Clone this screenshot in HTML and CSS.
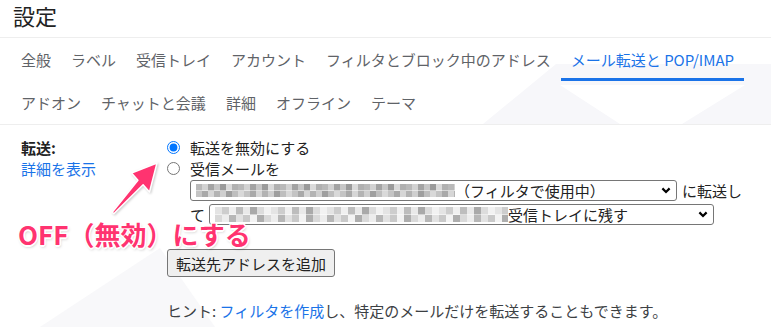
FILE: index.html
```html
<!DOCTYPE html>
<html lang="ja">
  <head>
    <meta charset="UTF-8" />
    <meta name="viewport" content="width=device-width, initial-scale=1.0" />
    <title>設定 - メール転送と POP/IMAP</title>
    <link rel="stylesheet" href="styles.css">
  </head>
  <body>
    <!-- faint background shapes -->
    <svg class="backdrop" width="771" height="327" viewBox="0 0 771 327">
      <path fill="#f7f7fa" fill-rule="evenodd"
        d="M483 124 L556 64 L771 64 L771 124 Z M560 85 L745 85 L682 124 L620 124 Z" />
      <path fill="#f8f8fa" d="M40 327 L160 248 L215 327 Z" />
    </svg>

    <h1 class="page-title">設定</h1>

    <nav class="tabs">
      <div class="tab-row">
        <a class="tab">全般</a>
        <a class="tab">ラベル</a>
        <a class="tab">受信トレイ</a>
        <a class="tab">アカウント</a>
        <a class="tab">フィルタとブロック中のアドレス</a>
        <a class="tab active">メール転送と POP/IMAP</a>
      </div>
      <div class="tab-row">
        <a class="tab">アドオン</a>
        <a class="tab">チャットと会議</a>
        <a class="tab">詳細</a>
        <a class="tab">オフライン</a>
        <a class="tab">テーマ</a>
      </div>
    </nav>

    <section class="forwarding">
      <div class="label-col">
        <div class="setting-name">転送:</div>
        <a class="more-link">詳細を表示</a>
      </div>

      <div class="options">
        <label class="radio-row">
          <input type="radio" name="fwd" checked />
          <span>転送を無効にする</span>
        </label>
        <label class="radio-row">
          <input type="radio" name="fwd" />
          <span>受信メールを</span>
        </label>

        <div class="fwd-line">
          <div class="fake-select addr">
            <span class="blur"></span>
            <span class="sel-text">（フィルタで使用中）</span>
            <svg class="chevron" width="10" height="7" viewBox="0 0 10 7">
              <path d="M1.4 1.4 L5 5 L8.6 1.4" fill="none" stroke="#000" stroke-width="2.2" />
            </svg>
          </div>
          <span class="after">に転送し</span>
        </div>
        <div class="fwd-line second">
          <span class="after">て</span>
          <div class="fake-select action">
            <span class="blur"></span>
            <span class="sel-text">受信トレイに残す</span>
            <svg class="chevron" width="10" height="7" viewBox="0 0 10 7">
              <path d="M1.4 1.4 L5 5 L8.6 1.4" fill="none" stroke="#000" stroke-width="2.2" />
            </svg>
          </div>
        </div>

        <button class="add-button">転送先アドレスを追加</button>

        <p class="hint">
          ヒント: <a class="hint-link">フィルタを作成</a>し、特定のメールだけを転送することもできます。
        </p>
      </div>
    </section>

    <!-- annotation -->
    <div class="callout">OFF（無効）にする</div>
    <svg class="arrow" width="771" height="327" viewBox="0 0 771 327">
      <polygon
        points="112.2,212.3 137.9,180.2 131.5,173 157,163 149.5,192 143.1,184.8 113.8,213.7"
        fill="#ff3370" stroke="#fff" stroke-width="1.5" stroke-linejoin="round" />
    </svg>
  </body>
</html>
```

FILE: styles.css
```css
html {
  background: #fff;
}

body {
  margin: 0;
  position: relative;
  width: 771px;
  height: 327px;
  overflow: hidden;
  font-family: "Noto Sans CJK JP", sans-serif;
  color: #222;
}

.backdrop {
  position: absolute;
  top: 0;
  left: 0;
  z-index: -1;
}

.page-title {
  margin: 0;
  padding: 0 13px;
  height: 37px;
  font-size: 22px;
  font-weight: 400;
  line-height: 30px;
  color: #222;
  border-bottom: 1px solid #eee;
}

/* tabs */
.tabs {
  padding-left: 11px;
  border-bottom: 1px solid #eee;
}

.tab-row {
  display: flex;
  height: 43px;
}

.tab {
  padding: 4px 10px 0;
  font-size: 15px;
  line-height: 36px;
  color: #5f6368;
  white-space: nowrap;
  border-bottom: 3px solid transparent;
}

.tab.active {
  color: #1a73e8;
  border-bottom-color: #1a73e8;
}

/* forwarding block */
.forwarding {
  display: grid;
  grid-template-columns: 167px 1fr;
  padding-top: 12px;
  font-size: 15px;
  line-height: 21px;
}

.label-col {
  padding-left: 21px;
}

.setting-name {
  font-weight: bold;
}

.more-link {
  display: block;
  color: #1a73e8;
}

.radio-row {
  display: flex;
  align-items: center;
  height: 21px;
}

.radio-row input {
  width: 13px;
  height: 13px;
  margin: 0 10px 0 0;
}

.fwd-line {
  display: flex;
  align-items: center;
  margin: 1px 0 0 23px;
}

.fwd-line.second {
  margin-top: 3px;
}

.after {
  line-height: 18px;
  margin-left: 5px;
}

.fwd-line.second .after {
  margin-left: 0;
}

.fake-select {
  display: flex;
  align-items: center;
  box-sizing: border-box;
  height: 21px;
  padding: 0 5px;
  background: #fff;
  border: 1px solid #767676;
  border-radius: 3px;
  line-height: 18px;
  white-space: nowrap;
}

.fake-select .chevron {
  margin-left: auto;
}

.addr {
  width: 487px;
}

.addr .blur {
  display: block;
  width: 259px;
  height: 13px;
  background:
    repeating-linear-gradient(90deg, #b9b9b9 0 6px, #d2d2d2 6px 12px, #a3a3a3 12px 18px, #c6c6c6 18px 24px, #9a9a9a 24px 30px, #dadada 30px 36px, #b0b0b0 36px 42px) top / 100% 50% no-repeat,
    repeating-linear-gradient(90deg, #c4c4c4 0 6px, #a9a9a9 6px 12px, #d6d6d6 12px 18px, #b3b3b3 18px 24px, #cfcfcf 24px 30px, #9f9f9f 30px 36px, #bebebe 36px 42px, #d9d9d9 42px 48px) bottom / 100% 50% no-repeat;
}

.action {
  width: 505px;
  height: 21px;
  margin-left: 4px;
}

.action .blur {
  display: block;
  width: 293px;
  height: 15px;
  background:
    repeating-linear-gradient(90deg, #e4e4e4 0 7px, #cdcdcd 7px 14px, #f0f0f0 14px 21px, #bdbdbd 21px 28px, #e9e9e9 28px 35px, #a9a9a9 35px 42px, #dcdcdc 42px 49px, #f2f2f2 49px 56px) top / 100% 50% no-repeat,
    repeating-linear-gradient(90deg, #d9d9d9 0 7px, #ededed 7px 14px, #b7b7b7 14px 21px, #e2e2e2 21px 28px, #c9c9c9 28px 35px, #f3f3f3 35px 42px, #aeaeae 42px 49px) bottom / 100% 50% no-repeat;
}

.add-button {
  display: block;
  margin-top: 24px;
  height: 28px;
  padding: 0 8px;
  font-family: "Noto Sans CJK JP", sans-serif;
  font-size: 15px;
  color: #222;
  background: #efefef;
  border: 1px solid #767676;
  border-radius: 3px;
}

.hint {
  margin: 23px 0 0;
  color: #3c4043;
  white-space: nowrap;
}

.hint-link {
  color: #1a73e8;
}

/* annotation */
.callout {
  position: absolute;
  left: 18px;
  top: 223px;
  font-size: 26px;
  font-weight: bold;
  line-height: 22px;
  color: #ff3370;
  white-space: nowrap;
  text-shadow:
    1.5px 0 0 #fff, -1.5px 0 0 #fff, 0 1.5px 0 #fff, 0 -1.5px 0 #fff,
    1px 1px 0 #fff, -1px -1px 0 #fff, 1px -1px 0 #fff, -1px 1px 0 #fff,
    1px 2px 3px rgba(0, 0, 0, 0.25);
}

.arrow {
  position: absolute;
  top: 0;
  left: 0;
  filter: drop-shadow(1px 1px 1px rgba(0, 0, 0, 0.2));
}
```
